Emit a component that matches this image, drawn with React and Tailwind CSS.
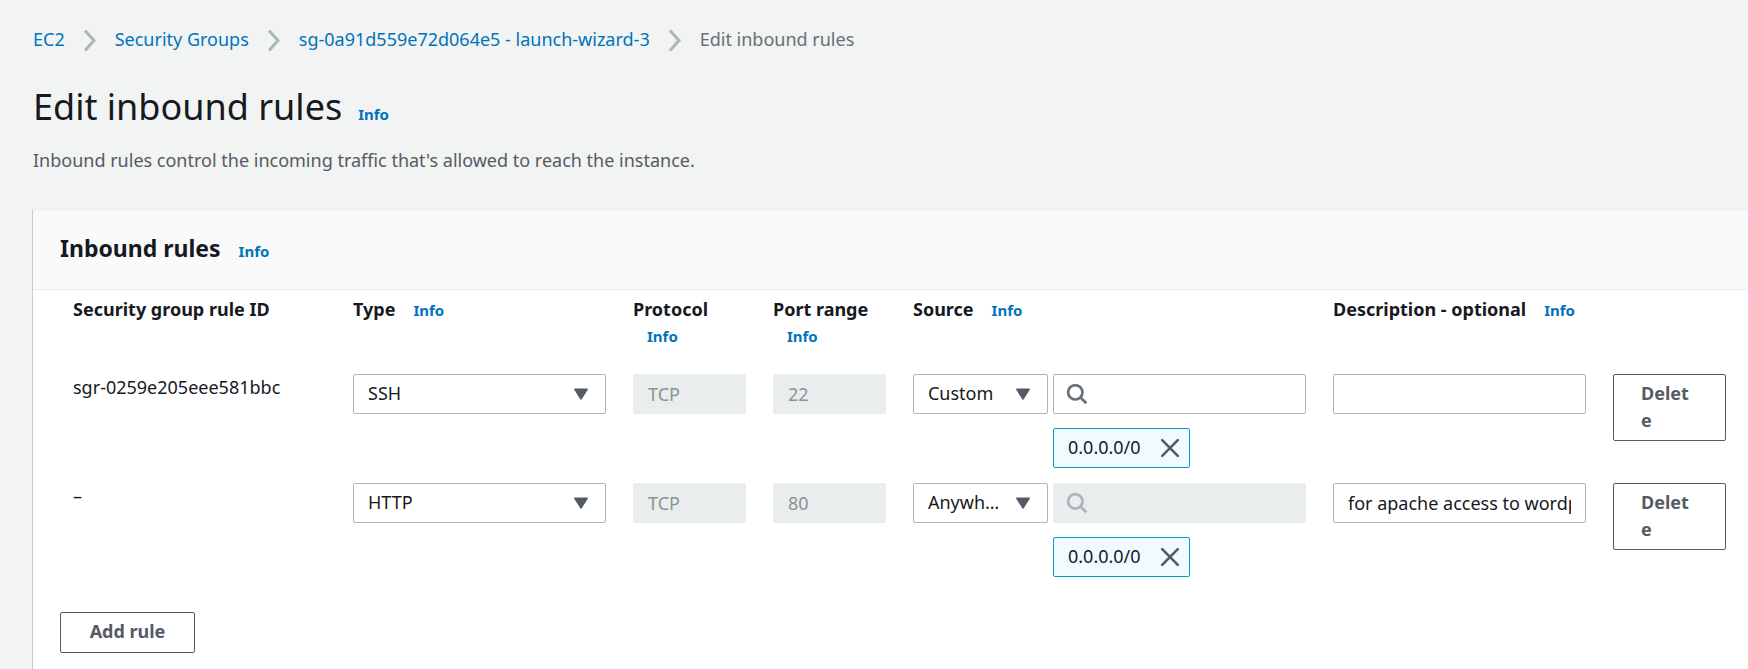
import React from "react";

const rules = [
  { id: "sgr-0259e205eee581bbc", type: "SSH", protocol: "TCP", port: "22", source: "Custom", cidr: "0.0.0.0/0", searchDisabled: false, description: "" },
  { id: "–", type: "HTTP", protocol: "TCP", port: "80", source: "Anywhere-IPv4", cidr: "0.0.0.0/0", searchDisabled: true, description: "for apache access to wordpress" },
];

function Info({ className = "" }) {
  return (
    <a href="#info" className={"text-[15px] font-bold text-[#0073bb] " + className}>
      Info
    </a>
  );
}

function Separator() {
  return (
    <svg aria-hidden="true" className="mx-[17px] h-6 w-4 shrink-0" viewBox="0 0 16 24" fill="none" stroke="#aab7b8" strokeWidth="3">
      <path d="M3 2.500l9 10-9 10" />
    </svg>
  );
}

function Select({ label, value }) {
  return (
    <div className="grid w-full items-center">
      <select
        aria-label={label}
        defaultValue={value}
        className="col-start-1 row-start-1 h-10 w-full appearance-none truncate rounded-[2px] border border-[#aab7b8] bg-white pr-10 pb-[2px] pl-[14px] text-[#16191f]"
      >
        <option>{value}</option>
      </select>
      <svg aria-hidden="true" className="pointer-events-none col-start-1 row-start-1 mr-[17px] h-4 w-4 justify-self-end" viewBox="0 0 16 16">
        <path d="M2 3.300h12l-6 9.500z" fill="#545b64" stroke="#545b64" strokeWidth="1.800" strokeLinejoin="round" />
      </svg>
    </div>
  );
}

function Search({ label, disabled }) {
  return (
    <div className="grid w-full items-center">
      <input
        type="text"
        aria-label={label}
        disabled={disabled}
        className="col-start-1 row-start-1 h-10 w-full rounded-[2px] border border-[#aab7b8] bg-white pr-[14px] pl-10 disabled:border-[#eaeded] disabled:bg-[#eaeded]"
      />
      <svg
        aria-hidden="true"
        className={"pointer-events-none col-start-1 row-start-1 ml-[13px] h-[22px] w-[22px] " + (disabled ? "text-[#aab7b8]" : "text-[#687078]")}
        viewBox="0 0 22 22"
        fill="none"
        stroke="currentColor"
        strokeWidth="2.700"
      >
        <circle cx="9.300" cy="9.300" r="7.200" />
        <path d="M14.300 14.300l6 6" />
      </svg>
    </div>
  );
}

function Token({ value }) {
  return (
    <div className="mt-[14px] flex h-10 w-[137px] items-center justify-between rounded-[2px] border border-[#00a1c9] bg-[#f1faff] pr-[9px] pl-[14px] text-[#16191f]">
      <span className="pb-[2px]">{value}</span>
      <button type="button" aria-label={"Remove " + value}>
        <svg aria-hidden="true" className="block h-5 w-5" viewBox="0 0 20 20" fill="none" stroke="#545b64" strokeWidth="2.600" strokeLinecap="round">
          <path d="M2.200 2.200l15.600 15.600M17.800 2.200l-15.600 15.600" />
        </svg>
      </button>
    </div>
  );
}

function Disabled({ label, value }) {
  return (
    <input
      type="text"
      aria-label={label}
      disabled
      defaultValue={value}
      className="block h-10 w-full rounded-[2px] border border-[#eaeded] bg-[#eaeded] px-[14px] text-[#879596]"
    />
  );
}

function Heading({ children, info, stacked }) {
  return (
    <th scope="col" className="pt-[6px] pr-[14px] pb-6 pl-[13px] text-left align-top font-bold">
      {children}
      {info && (stacked ? <Info className="block pl-[14px]" /> : <Info className="ml-[18px]" />)}
    </th>
  );
}

function Cell({ children }) {
  return <td className="pr-[14px] pl-[13px]">{children}</td>;
}

export default function App() {
  return (
    <div className="flex min-h-screen flex-col overflow-x-hidden bg-[#f2f3f3] pt-[26px] pl-8 font-['Noto_Sans',sans-serif] text-[18px] leading-[27px] text-[#16191f]">
      <nav aria-label="Breadcrumb" className="flex items-center pl-px text-[#0073bb]">
        <a href="#ec2">EC2</a>
        <Separator />
        <a href="#groups">Security Groups</a>
        <Separator />
        <a href="#group">sg-0a91d559e72d064e5 - launch-wizard-3</a>
        <Separator />
        <span className="text-[#687078]">Edit inbound rules</span>
      </nav>
      <header className="pt-[30px] pl-px">
        <h1 className="flex items-baseline gap-4 text-[36px] leading-[48px]">
          Edit inbound rules
          <Info />
        </h1>
        <p className="mt-[9px] text-[#545b64]">Inbound rules control the incoming traffic that's allowed to reach the instance.</p>
      </header>
      <main className="mt-[35px] flex-1 border-t border-l border-t-[#eaeded] border-l-[#c5cccc] bg-white">
        <h2 className="flex h-20 items-center border-b border-[#eaeded] bg-[#fafafa] pl-[27px] text-[23px] font-bold">
          <span className="flex items-baseline gap-[18px]">
            Inbound rules
            <Info />
          </span>
        </h2>
        <div className="pr-2 pl-[27px]">
          <table className="w-full table-fixed">
            <colgroup>
              <col className="w-2/12" />
              <col className="w-2/12" />
              <col className="w-1/12" />
              <col className="w-1/12" />
              <col className="w-3/12" />
              <col className="w-2/12" />
              <col className="w-1/12" />
            </colgroup>
            <thead>
              <tr>
                <Heading>Security group rule ID</Heading>
                <Heading info>Type</Heading>
                <Heading info stacked>Protocol</Heading>
                <Heading info stacked>Port range</Heading>
                <Heading info>Source</Heading>
                <Heading info>Description - optional</Heading>
                <td />
              </tr>
            </thead>
            <tbody>
              {rules.map((rule) => (
                <tr key={rule.id} className="h-[109px] align-top">
                  <Cell>{rule.id}</Cell>
                  <Cell>
                    <Select label="Type" value={rule.type} />
                  </Cell>
                  <Cell>
                    <Disabled label="Protocol" value={rule.protocol} />
                  </Cell>
                  <Cell>
                    <Disabled label="Port range" value={rule.port} />
                  </Cell>
                  <Cell>
                    <div className="flex gap-[5px]">
                      <div className="w-[135px] shrink-0">
                        <Select label="Source" value={rule.source} />
                      </div>
                      <div className="min-w-0 flex-1">
                        <Search label="Source search" disabled={rule.searchDisabled} />
                        <Token value={rule.cidr} />
                      </div>
                    </div>
                  </Cell>
                  <Cell>
                    <input
                      type="text"
                      aria-label="Description"
                      defaultValue={rule.description}
                      className="block h-10 w-full rounded-[2px] border border-[#aab7b8] bg-white px-[14px]"
                    />
                  </Cell>
                  <Cell>
                    <button
                      type="button"
                      className="block w-full rounded-[2px] border border-[#545b64] bg-white px-[27px] pt-[5px] pb-[6px] text-left font-bold break-all text-[#545b64]"
                    >
                      Delete
                    </button>
                  </Cell>
                </tr>
              ))}
            </tbody>
          </table>
          <button type="button" className="mt-5 h-[41px] w-[135px] rounded-[2px] border border-[#545b64] bg-white pb-[2px] font-bold text-[#545b64]">
            Add rule
          </button>
        </div>
      </main>
    </div>
  );
}
